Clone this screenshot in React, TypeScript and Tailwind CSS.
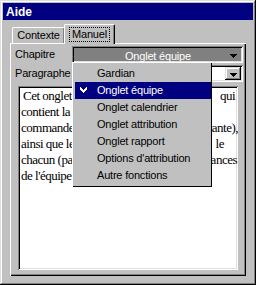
import React from "react";

const Arrow = () => (
  <svg width="7" height="4" viewBox="0 0 7 4" shapeRendering="crispEdges">
    <path d="M0 0h7v1H0zM1 1h5v1H1zM2 2h3v1H2zM3 3h1v1H3z" fill="#000" />
  </svg>
);

const Check = () => (
  <svg width="7" height="7" viewBox="0 0 7 7" shapeRendering="crispEdges">
    <path d="M6 0h1v3H6zM5 1h1v3H5zM4 2h1v3H4zM3 3h1v3H3zM2 2h1v3H2zM1 1h1v3H1zM0 0h1v3H0z" fill="#fff" />
  </svg>
);

const items = [
  "Gardian",
  "Onglet équipe",
  "Onglet calendrier",
  "Onglet attribution",
  "Onglet rapport",
  "Options d'attribution",
  "Autre fonctions",
];

export default function App() {
  return (
    <div
      className="relative w-[256px] h-[285px] bg-[#c0c0c0] p-[3px] flex flex-col shadow-[inset_-1px_-1px_0_#000,inset_1px_1px_0_#dfdfdf,inset_-2px_-2px_0_#808080,inset_2px_2px_0_#fff] text-[11px] tracking-[-0.2px] text-black"
      style={{ fontFamily: '"Liberation Sans", Arial, sans-serif' }}
    >
      <div className="h-[17px] bg-[#000080] text-white font-bold text-[12px] tracking-normal flex items-center pl-[3px]">
        Aide
      </div>

      <div className="mt-[5px] h-[18px] flex items-end pl-[9px]">
        <div className="h-[16px] w-[53px] border-l border-t border-white border-r border-r-black rounded-tl-[2px] rounded-tr-[2px] shadow-[inset_-1px_0_0_#808080] flex items-center justify-center">
          Contexte
        </div>
        <div className="relative z-10 -ml-[1px] -mb-[1px] h-[20px] w-[51px] bg-[#c0c0c0] border-l border-t border-white border-r border-r-black rounded-tl-[2px] rounded-tr-[2px] shadow-[inset_-1px_0_0_#808080] flex items-start justify-center pt-[2px]">
          <span className="border border-dotted border-black px-[2px] leading-[13px]">Manuel</span>
        </div>
      </div>

      <div className="mx-[7px] h-[233px] bg-[#c0c0c0] shadow-[inset_1px_1px_0_#fff,inset_-1px_-1px_0_#000,inset_-2px_-2px_0_#808080] pt-[3px] pl-[5px] flex flex-col">
        <div className="flex items-center h-[17px]">
          <div className="w-[57px]">Chapitre</div>
          <div className="relative w-[171px] h-[17px] bg-[#808080] shadow-[inset_1px_1px_0_#808080,inset_-1px_-1px_0_#fff,inset_2px_2px_0_#000,inset_-2px_-2px_0_#dfdfdf]">
            <div className="absolute left-[53px] top-[4px] text-white leading-[13px] whitespace-nowrap">Onglet équipe</div>
            <div className="absolute right-[2px] top-[2px] w-[16px] h-[13px] bg-[#808080] flex items-end justify-center pb-[3px]">
              <Arrow />
            </div>
          </div>
        </div>
        <div className="flex items-center h-[17px] mt-[2px]">
          <div className="w-[57px]">Paragraphe</div>
          <div className="relative w-[171px] h-[17px] bg-white shadow-[inset_1px_1px_0_#808080,inset_-1px_-1px_0_#fff,inset_2px_2px_0_#000,inset_-2px_-2px_0_#dfdfdf]">
            <div className="absolute left-[4px] top-[2px] leading-[13px]">Gardian</div>
            <div className="absolute right-[2px] top-[2px] w-[16px] h-[13px] bg-[#c0c0c0] shadow-[inset_-1px_-1px_0_#000,inset_1px_1px_0_#dfdfdf,inset_-2px_-2px_0_#808080,inset_2px_2px_0_#fff] flex items-end justify-center pb-[3px]">
              <Arrow />
            </div>
          </div>
        </div>
        <div
          className="mt-[4px] ml-[3px] w-[220px] h-[184px] bg-white shadow-[inset_1px_1px_0_#808080,inset_-1px_-1px_0_#fff,inset_2px_2px_0_#000,inset_-2px_-2px_0_#dfdfdf] pt-[2px] pl-[3px] text-[13px] leading-[16px] tracking-[-0.5px]"
          style={{ fontFamily: '"Liberation Serif", "Times New Roman", serif' }}
        >
          <div className="flex justify-between whitespace-nowrap pl-[2px] pr-[3px]">
            <span>Cet onglet présente la fenêtre</span>
            <span>qui</span>
          </div>
          <div className="whitespace-nowrap">contient la liste des joueurs et des</div>
          <div className="flex justify-between whitespace-nowrap pr-0">
            <span>commandes (passée et</span>
            <span>courante),</span>
          </div>
          <div className="flex justify-between whitespace-nowrap pr-[14px]">
            <span>ainsi que les statistiques de</span>
            <span>le</span>
          </div>
          <div className="flex justify-between whitespace-nowrap pr-[1px]">
            <span>chacun (passes, buts) et les</span>
            <span>performances</span>
          </div>
          <div className="whitespace-nowrap">de l'équipe.</div>
        </div>
      </div>

      <div className="absolute left-[72px] top-[62px] w-[140px] h-[125px] bg-[#c0c0c0] shadow-[inset_1px_1px_0_#fff,inset_-1px_-1px_0_#000] pt-[3px] pl-[3px] pr-[1px]">
        {items.map((it, i) => (
          <div
            key={it}
            className={`h-[17px] flex items-center whitespace-nowrap ${i === 1 ? "bg-[#000080] text-white" : ""}`}
          >
            <div className="w-[22px] flex pl-[5px]">{i === 1 ? <Check /> : null}</div>
            <span>{it}</span>
          </div>
        ))}
      </div>
    </div>
  );
}
